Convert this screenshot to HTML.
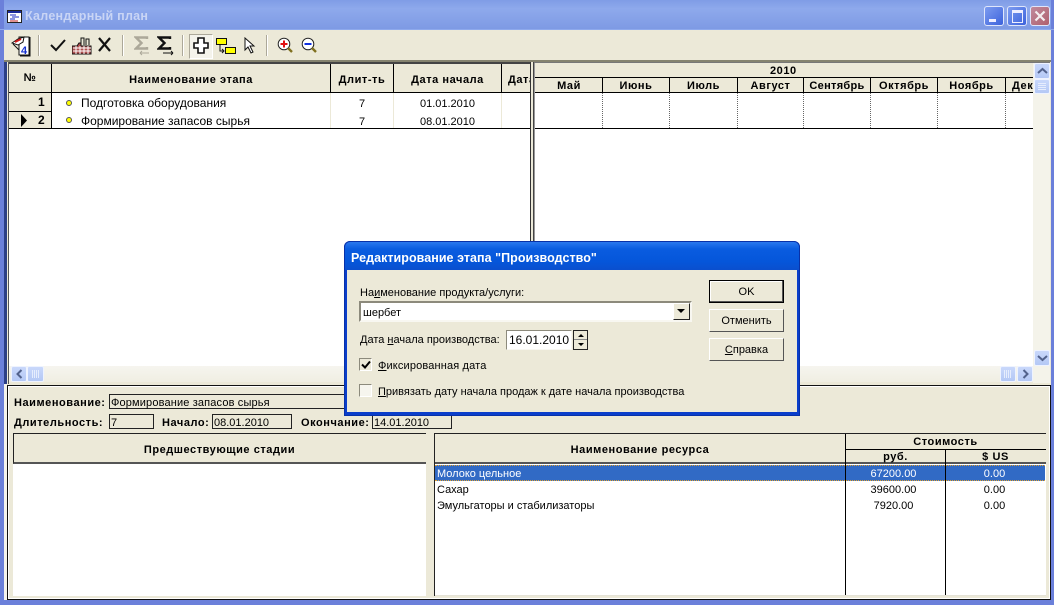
<!DOCTYPE html>
<html><head><meta charset="utf-8">
<style>
html,body{margin:0;padding:0;width:1054px;height:605px;overflow:hidden;background:#ece9d8}
body{position:relative;font:11px "Liberation Sans",sans-serif;color:#000}
div,span.t,svg{position:absolute}
.t{position:absolute;white-space:nowrap;line-height:14px}
.b{font-weight:bold;letter-spacing:.55px}
.c{text-align:center}
.sb{background:linear-gradient(#c9d8fb,#b4c8f5);border:1px solid #eef3ff;border-radius:2px;box-sizing:border-box}
.win{border-radius:3px;border:1px solid #dfe6fb;box-sizing:border-box}
.sep{top:35px;width:1px;height:21px;background:#aca899;border-right:1px solid #fff}
u{text-decoration:underline}
</style></head><body>

<!-- window frame -->
<div style="left:0;top:0;width:1054px;height:29px;background:linear-gradient(#7f9ce6,#8ea9ec 30%,#7e9ae4)"></div>
<div style="left:0;top:0;width:4px;height:605px;background:#6b80da"></div>
<div style="left:1051px;top:0;width:3px;height:605px;background:#6b80da"></div>
<div style="left:0;top:600px;width:1054px;height:5px;background:#6b80da"></div>
<div style="left:0;top:29px;width:1054px;height:1px;background:#8ea9ec"></div>

<svg style="left:7px;top:10px" width="15" height="13" viewBox="0 0 15 13"><rect x=".5" y=".5" width="14" height="12" fill="#fff" stroke="#222"/><rect x="1" y="1" width="13" height="2" fill="#1a2a9a"/><path d="M3 5h6M5 7h7M3 9h5" stroke="#1a2ac0"/><path d="M3 11h8" stroke="#c02020"/></svg>
<span class="t" style="left:25px;top:9px;font-size:12.5px;font-weight:bold;letter-spacing:.27px;color:#c9d5f5">Календарный план</span>

<div class="win" style="left:984px;top:6px;width:20px;height:20px;background:linear-gradient(135deg,#7d9cf0,#3c62dc)"><div style="left:4px;top:12px;width:7px;height:3px;background:#eef"></div></div>
<div class="win" style="left:1007px;top:6px;width:20px;height:20px;background:linear-gradient(135deg,#7d9cf0,#3c62dc)"><div style="left:4px;top:3px;width:9px;height:9px;border:1px solid #eef;border-top-width:3px"></div></div>
<div class="win" style="left:1030px;top:6px;width:20px;height:20px;background:linear-gradient(135deg,#c08a9c,#b0606e)"><svg style="left:3px;top:3px" width="12" height="12"><path d="M1.5 1.5l9 9M10.5 1.5l-9 9" stroke="#f4eef0" stroke-width="2.2"/></svg></div>

<!-- toolbar -->
<div style="left:4px;top:30px;width:1047px;height:30px;background:#ece9d8"></div>
<div style="left:4px;top:60px;width:1047px;height:2px;background:#85836f"></div>

<svg style="left:10px;top:35px" width="22" height="22" viewBox="0 0 22 22"><path d="M9 2h10v18H9z" fill="#fff" stroke="#111"/><path d="M20 2v19H10" fill="none" stroke="#111"/><path d="M2 8l6-4 6-2-1 5-5 3z" fill="#fff" stroke="#111"/><path d="M5 7l6-3" stroke="#d01818" stroke-width="2"/><path d="M3 9l6 6" stroke="#111"/><text x="11" y="19" font-size="11" font-weight="bold" fill="#1530d0" font-family="Liberation Sans">4</text></svg>
<div class="sep" style="left:38px"></div>
<svg style="left:50px;top:37px" width="17" height="16"><path d="M1 8l5 5L15 3" fill="none" stroke="#111" stroke-width="2"/></svg>
<svg style="left:72px;top:36px" width="20" height="19" viewBox="0 0 20 19"><path d="M0 18V10h5l2-3h2v3h10v8z" fill="#b05050" stroke="#111"/><path d="M9 9V2h3v7M14 9V3h3v6" fill="#ece9d8" stroke="#111"/><path d="M1 12h18M1 15h18M4 10v8M8 10v8M12 10v8M16 10v8" stroke="#fff"/></svg>
<svg style="left:97px;top:37px" width="15" height="15"><path d="M2 1l11 13M13 1L2 14" stroke="#111" stroke-width="2.2"/></svg>
<div class="sep" style="left:122px"></div>
<svg style="left:134px;top:36px" width="18" height="21"><path d="M13 3V1.500H2L7.500 7 2 12.500h11V11" fill="none" stroke="#aca899" stroke-width="2.4"/><path d="M6 17h9M6 17l2-2M6 17l2 2" stroke="#aca899" fill="none"/></svg>
<svg style="left:157px;top:36px" width="18" height="21"><path d="M13 3V1.500H2L7.500 7 2 12.500h11V11" fill="none" stroke="#111" stroke-width="2.4"/><path d="M6 17h10M16 17l-2-2M16 17l-2 2" stroke="#111" fill="none"/></svg>
<div class="sep" style="left:182px"></div>
<div style="left:189px;top:34px;width:22px;height:23px;background:#f4f3eb;border:1px solid;border-color:#aca899 #fff #fff #aca899"></div>
<svg style="left:193px;top:37px" width="16" height="17"><path d="M5 1h6v5h4v5h-4v5H5v-5H1V6h4z" fill="#fff" stroke="#111" stroke-width="1.6"/></svg>
<svg style="left:216px;top:36px" width="20" height="19"><rect x=".5" y="2.500" width="10" height="6" fill="#ffff00" stroke="#111"/><rect x="9.500" y="11.500" width="10" height="6" fill="#ffff00" stroke="#111"/><path d="M4 9v6h4M6 13l2 2-2 2" fill="none" stroke="#111"/></svg>
<svg style="left:244px;top:37px" width="12" height="17"><path d="M1 1v12l3-3 3 6 2-1-3-6h4z" fill="#fff" stroke="#111"/></svg>
<div class="sep" style="left:266px"></div>
<svg style="left:277px;top:37px" width="16" height="17"><circle cx="7" cy="7" r="5.800" fill="#fff" stroke="#222"/><path d="M7 3.500v7M3.500 7h7" stroke="#e01010" stroke-width="2"/><path d="M11 11l4 4" stroke="#807020" stroke-width="2.400"/></svg>
<svg style="left:301px;top:37px" width="16" height="17"><circle cx="7" cy="7" r="5.800" fill="#fff" stroke="#222"/><path d="M3.500 7h7" stroke="#1030e0" stroke-width="2"/><path d="M11 11l4 4" stroke="#807020" stroke-width="2.400"/></svg>

<!-- left edge strip -->
<div style="left:4px;top:62px;width:3px;height:322px;background:#2c3f86"></div>
<div style="left:4px;top:384px;width:3px;height:216px;background:#f4f3ec"></div>

<!-- left grid -->
<div style="left:7px;top:62px;width:525px;height:323px;background:#ece9d8"></div>
<div style="left:9px;top:62px;width:521px;height:304px;background:#fff"></div>
<div style="left:8px;top:62px;width:1px;height:322px;background:#555"></div>
<div style="left:530px;top:62px;width:1px;height:322px;background:#333"></div>
<div style="left:9px;top:62px;width:521px;height:31px;background:#ece9d8;border-bottom:1px solid #000;box-sizing:border-box"></div>
<div style="left:9px;top:62px;width:521px;height:2px;background:#444"></div>
<div style="left:9px;top:93px;width:42px;height:36px;background:#ece9d8"></div>
<div style="left:9px;top:111px;width:42px;height:1px;background:#000"></div>
<div style="left:9px;top:128px;width:521px;height:1px;background:#000"></div>
<div style="left:51px;top:64px;width:1px;height:65px;background:#000"></div>
<div style="left:330px;top:64px;width:1px;height:29px;background:#000"></div>
<div style="left:393px;top:64px;width:1px;height:29px;background:#000"></div>
<div style="left:501px;top:64px;width:1px;height:29px;background:#000"></div>
<div style="left:330px;top:93px;width:1px;height:35px;background:#ece9d8"></div>
<div style="left:393px;top:93px;width:1px;height:35px;background:#ece9d8"></div>
<div style="left:501px;top:93px;width:1px;height:35px;background:#ece9d8"></div>

<span class="t b c" style="left:9px;width:42px;top:71px">№</span>
<span class="t b c" style="left:52px;width:278px;top:73px">Наименование этапа</span>
<span class="t b c" style="left:331px;width:62px;top:73px">Длит-ть</span>
<span class="t b c" style="left:394px;width:107px;top:73px">Дата начала</span>
<div style="left:502px;top:70px;width:28px;height:18px;overflow:hidden"><span class="t b" style="left:6px;top:3px">Дата</span></div>

<span class="t b" style="left:38px;top:95px;font-size:12px">1</span>
<span class="t b" style="left:38px;top:113px;font-size:12px">2</span>
<svg style="left:20px;top:114px" width="8" height="13"><path d="M1 0l6 6.500-6 6.500z" fill="#000"/></svg>
<div style="left:66px;top:100px;width:4px;height:4px;border-radius:50%;background:#ffff00;border:1px solid #555"></div>
<div style="left:66px;top:117px;width:4px;height:4px;border-radius:50%;background:#ffff00;border:1px solid #555"></div>
<span class="t" style="left:81px;top:96px;font-size:12px">Подготовка оборудования</span>
<span class="t" style="left:81px;top:114px;font-size:12px">Формирование запасов сырья</span>
<span class="t c" style="left:331px;width:62px;top:97px">7</span>
<span class="t c" style="left:331px;width:62px;top:115px">7</span>
<span class="t c" style="left:394px;width:107px;top:97px">01.01.2010</span>
<span class="t c" style="left:394px;width:107px;top:115px">08.01.2010</span>

<!-- left hscroll -->
<div style="left:9px;top:366px;width:521px;height:16px;background:linear-gradient(#f6f5ef,#f0eee2)"></div>
<div class="sb" style="left:11px;top:366px;width:16px;height:16px"><svg style="left:3px;top:2px" width="9" height="10"><path d="M6.500 1l-4 4 4 4" fill="none" stroke="#52628c" stroke-width="2"/></svg></div>
<div class="sb" style="left:27px;top:366px;width:17px;height:16px"><svg style="left:4px;top:3px" width="8" height="8"><path d="M.5 0v8M2.500 0v8M4.500 0v8M6.500 0v8" stroke="#e6edfd"/></svg></div>

<!-- right grid -->
<div style="left:531px;top:62px;width:520px;height:323px;background:#ece9d8"></div>
<div style="left:533px;top:62px;width:1px;height:322px;background:#444"></div>
<div style="left:535px;top:62px;width:498px;height:304px;background:#fff"></div>
<div style="left:534px;top:62px;width:1px;height:322px;background:#999"></div>
<div style="left:535px;top:62px;width:498px;height:31px;background:#ece9d8;border-bottom:1px solid #000;box-sizing:border-box"></div>
<div style="left:534px;top:62px;width:516px;height:1px;background:#777"></div>
<div style="left:535px;top:77px;width:498px;height:1px;background:#000"></div>
<div style="left:535px;top:128px;width:498px;height:1px;background:#000"></div>
<span class="t b" style="left:770px;top:64px">2010</span>
<div style="left:602px;top:78px;width:1px;height:15px;background:#000"></div>
<div style="left:669px;top:78px;width:1px;height:15px;background:#000"></div>
<div style="left:737px;top:78px;width:1px;height:15px;background:#000"></div>
<div style="left:803px;top:78px;width:1px;height:15px;background:#000"></div>
<div style="left:870px;top:78px;width:1px;height:15px;background:#000"></div>
<div style="left:937px;top:78px;width:1px;height:15px;background:#000"></div>
<div style="left:1005px;top:78px;width:1px;height:15px;background:#000"></div>
<div style="left:602px;top:93px;height:35px;border-left:1px dotted #666"></div>
<div style="left:669px;top:93px;height:35px;border-left:1px dotted #666"></div>
<div style="left:737px;top:93px;height:35px;border-left:1px dotted #666"></div>
<div style="left:803px;top:93px;height:35px;border-left:1px dotted #666"></div>
<div style="left:870px;top:93px;height:35px;border-left:1px dotted #666"></div>
<div style="left:937px;top:93px;height:35px;border-left:1px dotted #666"></div>
<div style="left:1005px;top:93px;height:35px;border-left:1px dotted #666"></div>
<span class="t b c" style="left:536px;width:66px;top:79px">Май</span>
<span class="t b c" style="left:603px;width:66px;top:79px">Июнь</span>
<span class="t b c" style="left:670px;width:67px;top:79px">Июль</span>
<span class="t b c" style="left:738px;width:65px;top:79px">Август</span>
<span class="t b c" style="left:804px;width:66px;top:79px;letter-spacing:.3px">Сентябрь</span>
<span class="t b c" style="left:871px;width:66px;top:79px">Октябрь</span>
<span class="t b c" style="left:938px;width:67px;top:79px">Ноябрь</span>
<div style="left:1006px;top:78px;width:27px;height:15px;overflow:hidden"><span class="t b" style="left:6px;top:1px">Декабрь</span></div>

<!-- right vscroll + hscroll -->
<div style="left:1033px;top:63px;width:17px;height:320px;background:#f4f3ea"></div>
<div style="left:535px;top:366px;width:498px;height:16px;background:linear-gradient(#f6f5ef,#f0eee2)"></div>
<div class="sb" style="left:1034px;top:63px;width:16px;height:16px"><svg style="left:2px;top:3px" width="11" height="8"><path d="M1 6l4.500-4 4.500 4" fill="none" stroke="#52628c" stroke-width="2"/></svg></div>
<div class="sb" style="left:1034px;top:79px;width:16px;height:15px"><svg style="left:3px;top:3px" width="8" height="8"><path d="M0 .5h8M0 2.500h8M0 4.500h8M0 6.500h8" stroke="#e6edfd"/></svg></div>
<div class="sb" style="left:1034px;top:350px;width:16px;height:16px"><svg style="left:2px;top:3px" width="11" height="8"><path d="M1 2l4.500 4 4.500-4" fill="none" stroke="#52628c" stroke-width="2"/></svg></div>
<div class="sb" style="left:1000px;top:366px;width:16px;height:16px"><svg style="left:3px;top:3px" width="8" height="8"><path d="M.5 0v8M2.500 0v8M4.500 0v8M6.500 0v8" stroke="#e6edfd"/></svg></div>
<div class="sb" style="left:1017px;top:366px;width:16px;height:16px"><svg style="left:3px;top:2px" width="9" height="10"><path d="M2.500 1l4 4-4 4" fill="none" stroke="#52628c" stroke-width="2"/></svg></div>

<!-- bottom panel -->
<div style="left:7px;top:385px;width:1044px;height:215px;background:#ece9d8;border:1px solid #111;box-shadow:inset 1px 1px 0 #fff,inset -1px -1px 0 #fff;box-sizing:border-box"></div>
<span class="t b" style="left:14px;top:396px">Наименование:</span>
<div style="left:109px;top:394px;width:590px;height:15px;border:1px solid #222;box-sizing:border-box"></div>
<span class="t" style="left:111px;top:396px;letter-spacing:.15px">Формирование запасов сырья</span>
<span class="t b" style="left:14px;top:416px">Длительность:</span>
<div style="left:109px;top:414px;width:45px;height:15px;border:1px solid #222;box-sizing:border-box"></div>
<span class="t" style="left:111px;top:416px">7</span>
<span class="t b" style="left:162px;top:416px">Начало:</span>
<div style="left:212px;top:414px;width:80px;height:15px;border:1px solid #222;box-sizing:border-box"></div>
<span class="t" style="left:214px;top:416px">08.01.2010</span>
<span class="t b" style="left:301px;top:416px">Окончание:</span>
<div style="left:372px;top:414px;width:80px;height:15px;border:1px solid #222;box-sizing:border-box"></div>
<span class="t" style="left:374px;top:416px">14.01.2010</span>

<!-- predecessors -->
<div style="left:13px;top:433px;width:413px;height:163px;background:#fff;border-top:1px solid #222;box-sizing:border-box"></div>
<div style="left:13px;top:434px;width:413px;height:30px;background:#ece9d8;border-bottom:2px solid #555;border-left:1px solid #222;box-sizing:border-box"></div>
<span class="t b c" style="left:14px;width:411px;top:443px">Предшествующие стадии</span>

<!-- resources -->
<div style="left:434px;top:433px;width:612px;height:163px;background:#fff;border:1px solid #222;border-width:1px 0 0 1px;box-sizing:border-box"></div>
<div style="left:435px;top:434px;width:611px;height:30px;background:#ece9d8;border-bottom:2px solid #555;box-sizing:border-box"></div>
<div style="left:435px;top:595px;width:611px;height:1px;background:#e4e2d6"></div>
<div style="left:845px;top:449px;width:201px;height:1px;background:#000"></div>
<span class="t b c" style="left:435px;width:410px;top:443px">Наименование ресурса</span>
<span class="t b c" style="left:846px;width:199px;top:435px">Стоимость</span>
<span class="t b c" style="left:846px;width:99px;top:450px">руб.</span>
<span class="t b c" style="left:946px;width:99px;top:450px">$ US</span>
<div style="left:435px;top:465px;width:610px;height:16px;background:#316ac5;border-top:1px dotted #e0a030;border-bottom:1px dotted #e0a030;box-sizing:border-box"></div>
<div style="left:845px;top:434px;width:1px;height:161px;background:#000"></div>
<div style="left:945px;top:450px;width:1px;height:145px;background:#000"></div>
<span class="t" style="left:437px;top:467px;color:#fff">Молоко цельное</span>
<span class="t c" style="left:846px;width:95px;top:467px;color:#fff">67200.00</span>
<span class="t c" style="left:946px;width:97px;top:467px;color:#fff">0.00</span>
<span class="t" style="left:437px;top:483px">Сахар</span>
<span class="t c" style="left:846px;width:95px;top:483px">39600.00</span>
<span class="t c" style="left:946px;width:97px;top:483px">0.00</span>
<span class="t" style="left:437px;top:499px">Эмульгаторы и стабилизаторы</span>
<span class="t c" style="left:846px;width:95px;top:499px">7920.00</span>
<span class="t c" style="left:946px;width:97px;top:499px">0.00</span>

<!-- dialog -->
<div style="left:344px;top:241px;width:456px;height:175px;background:#0a3ecb;border-radius:6px 6px 0 0;box-shadow:inset 0 0 0 1px #0831a8"></div>
<div style="left:345px;top:242px;width:454px;height:28px;border-radius:5px 5px 0 0;background:linear-gradient(#2a78ee,#0a5ce0 25%,#0556da 70%,#0a4fce)"></div>
<span class="t" style="left:351px;top:251px;font-size:12.5px;font-weight:bold;color:#fff;letter-spacing:.05px">Редактирование этапа "Производство"</span>
<div style="left:347px;top:270px;width:450px;height:142px;background:#ece9d8"></div>

<span class="t" style="left:360px;top:286px">На<u>и</u>менование продукта/услуги:</span>
<div style="left:359px;top:301px;width:333px;height:21px;background:#fff;border:2px solid;border-color:#8c8a7c #f8f7f1 #f8f7f1 #8c8a7c;box-sizing:border-box"></div>
<span class="t" style="left:363px;top:306px">шербет</span>
<div style="left:673px;top:303px;width:17px;height:17px;background:#ece9d8;border:1px solid;border-color:#fff #222 #222 #fff;box-sizing:border-box"><svg style="left:3px;top:5px" width="9" height="5"><path d="M0 0h8l-4 4z" fill="#000"/></svg></div>

<span class="t" style="left:360px;top:333px">Дата <u>н</u>ачала производства:</span>
<div style="left:506px;top:330px;width:66px;height:20px;background:#fff;border:1px solid;border-color:#8c8a7c #f8f7f1 #f8f7f1 #8c8a7c;box-sizing:border-box"></div>
<span class="t" style="left:509px;top:333px;font-size:12px">16.01.2010</span>
<div style="left:573px;top:330px;width:15px;height:20px;background:#ece9d8;border:1px solid #222;box-sizing:border-box"><svg style="left:2px;top:2px" width="10" height="15"><path d="M5 1l3 3H2zM2 10h6l-3 3z" fill="#000"/></svg><div style="left:0;top:8px;width:13px;height:1px;background:#888"></div></div>

<div style="left:359px;top:358px;width:13px;height:13px;background:#ece9d8;border:1px solid;border-color:#8c8a7c #fff #fff #8c8a7c;box-sizing:border-box"><svg style="left:1px;top:1px" width="10" height="10"><path d="M1 4.500l3 3 5-6" fill="none" stroke="#000" stroke-width="2"/></svg></div>
<span class="t" style="left:378px;top:359px;letter-spacing:.15px"><u>Ф</u>иксированная дата</span>
<div style="left:359px;top:384px;width:13px;height:13px;background:#f6f5ee;border:1px solid;border-color:#8c8a7c #fff #fff #8c8a7c;box-sizing:border-box"></div>
<span class="t" style="left:378px;top:385px;letter-spacing:0"><u>П</u>ривязать дату начала продаж к дате начала производства</span>

<div style="left:709px;top:280px;width:75px;height:23px;background:#ece9d8;border:1px solid #000;box-shadow:inset -1px -1px 0 #555,inset 1px 1px 0 #fff;box-sizing:border-box"></div>
<span class="t c" style="left:709px;width:75px;top:285px">OK</span>
<div style="left:709px;top:309px;width:75px;height:23px;background:#ece9d8;border:1px solid;border-color:#fff #555 #555 #fff;box-sizing:border-box"></div>
<span class="t c" style="left:709px;width:75px;top:314px">Отменить</span>
<div style="left:709px;top:338px;width:75px;height:23px;background:#ece9d8;border:1px solid;border-color:#fff #555 #555 #fff;box-sizing:border-box"></div>
<span class="t c" style="left:709px;width:75px;top:343px"><u>С</u>правка</span>

</body></html>
